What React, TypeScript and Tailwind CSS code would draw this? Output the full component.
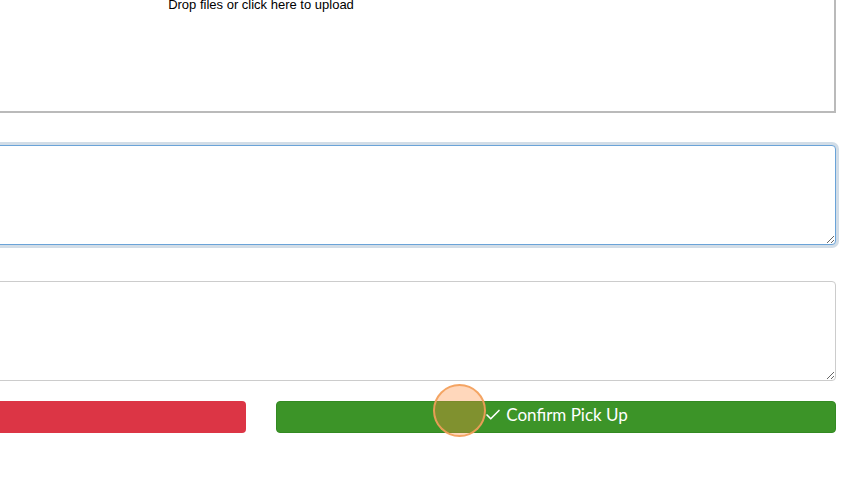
import { Check } from 'lucide-react';

function App() {
  return (
    <main className="relative h-[481px] w-full overflow-hidden bg-white font-['Lato',sans-serif]">
      {/* form, scrolled so its left part sits off screen */}
      <div className="ml-[-314px] mt-[-40px] flex w-[1150px] flex-col">
        <div className="flex h-[153px] justify-center border-2 border-[#bababa] pt-[34px] font-['Liberation_Sans',sans-serif] text-[13px] leading-[18px] text-black">
          Drop files or click here to upload
        </div>

        <textarea
          className="mt-[32px] h-[100px] w-full resize-y rounded-[4px] border border-[#6aa3d8] bg-white px-3 py-2 shadow-[0_0_0_3px_#d2dde7] outline-none"
          defaultValue=""
        />

        <textarea
          className="mt-[36px] h-[100px] w-full resize-y rounded-[4px] border border-[#cccccc] bg-white px-3 py-2 outline-none"
          defaultValue=""
        />

        <div className="mt-[20px] grid grid-cols-2 gap-[30px]">
          <button className="h-[32px] rounded-[4px] bg-[#dc3545]" />
          <button className="flex h-[32px] items-center justify-center gap-1 rounded-[4px] border border-[#338a22] bg-[#3c9428] pb-[5px] text-[17px] leading-[20px] text-white">
            <Check size={18} strokeWidth={2.2} />
            Confirm Pick Up
          </button>
        </div>
      </div>

      {/* click marker */}
      <div className="absolute left-[433px] top-[384px] h-[53px] w-[53px] rounded-full border-2 border-[rgba(243,160,90,0.9)] bg-[rgba(255,140,60,0.35)]" />
    </main>
  );
}

export default App;
